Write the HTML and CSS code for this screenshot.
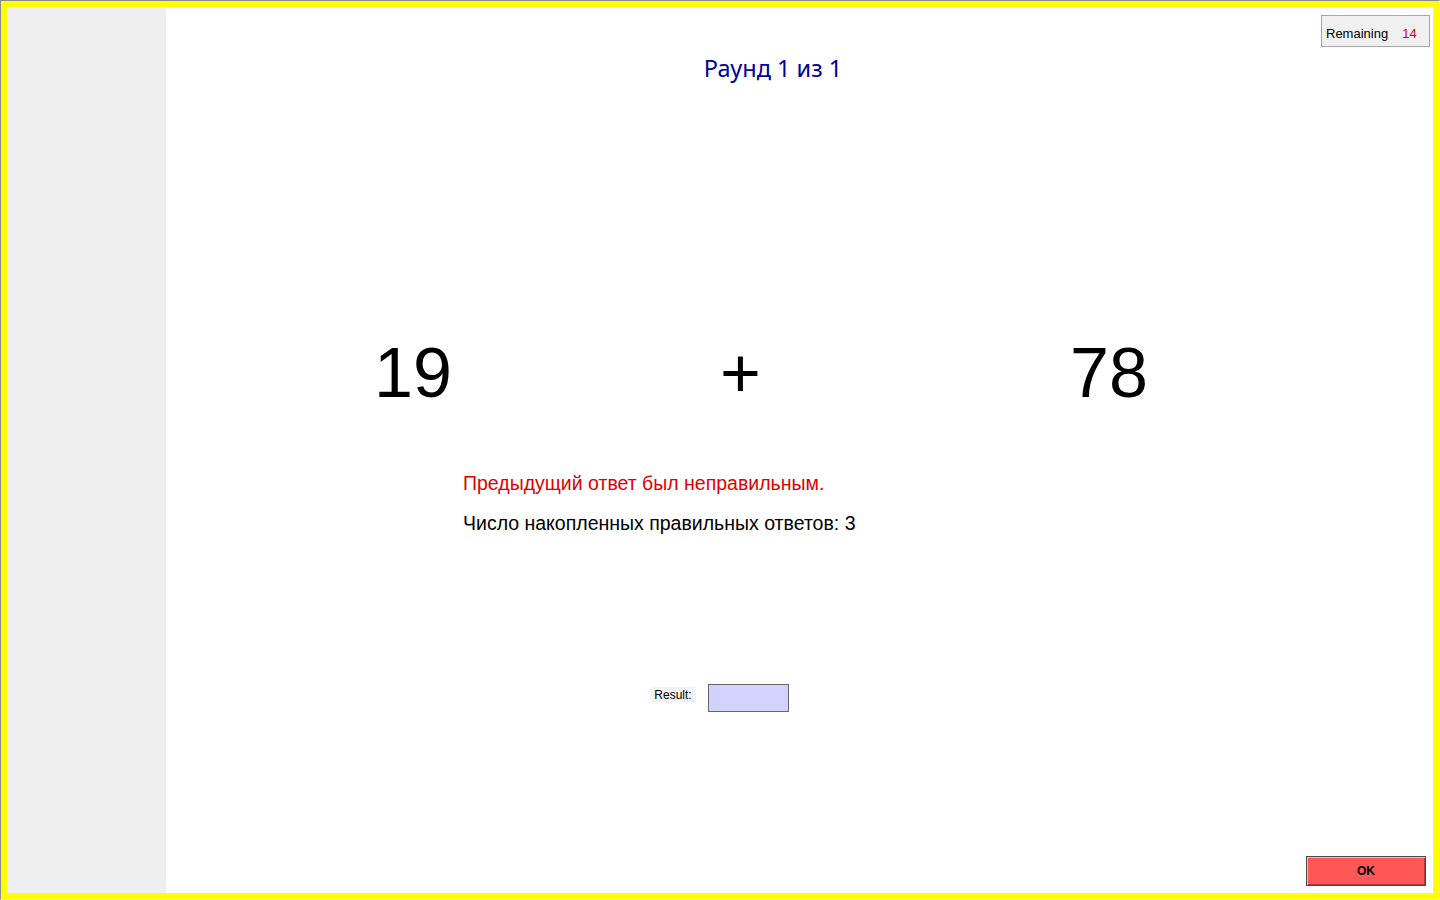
FILE: index.html
```html
<!DOCTYPE html>
<html lang="ru">
<head>
<meta charset="utf-8">
<title>Раунд 1 из 1</title>
<link rel="stylesheet" href="styles.css">
</head>
<body>
<div class="frame">
  <div class="inner">
    <aside class="side"></aside>
    <main class="main">
      <div class="topbar">
        <div class="remaining"><span class="rem-label">Remaining</span><span class="rem-count">14</span></div>
      </div>
      <h1 class="title">Раунд 1 из 1</h1>
      <div class="problem">
        <div class="operand">19</div>
        <div class="operator">+</div>
        <div class="operand">78</div>
      </div>
      <div class="messages">
        <p class="msg msg-error">Предыдущий ответ был неправильным.</p>
        <p class="msg">Число накопленных правильных ответов: 3</p>
      </div>
      <div class="result-row">
        <label class="result-label" for="result">Result:</label>
        <input class="result-input" id="result" type="text">
      </div>
      <button class="ok-btn" type="button">OK</button>
    </main>
  </div>
</div>
</body>
</html>
```
FILE: styles.css
```css
* { box-sizing: border-box; }
html, body { margin: 0; padding: 0; }
body {
  width: 1440px;
  height: 900px;
  overflow: hidden;
  background: #ffffff;
  font-family: "Liberation Sans", Arial, sans-serif;
}
.frame {
  width: 1440px;
  height: 900px;
  border-top: 1px solid #8a8a8a;
  border-left: 1px solid #8a8a8a;
  border-right: 1px solid #e6e6e6;
  border-bottom: 1px solid #e6e6e6;
}
.inner {
  height: 100%;
  border: 6px solid #ffff00;
  display: flex;
}
.side {
  width: 159px;
  flex: none;
  background: #efefef;
}
.main {
  flex: 1;
  display: flex;
  flex-direction: column;
  background: #ffffff;
}
.topbar {
  display: flex;
  justify-content: flex-end;
  padding-top: 8px;
  padding-right: 3px;
}
.remaining {
  width: 109px;
  height: 32px;
  border: 1px solid #a5a5a5;
  background: #f0f0f0;
  display: flex;
  align-items: center;
  padding-left: 4px;
  padding-top: 4px;
  font-size: 13px;
  color: #000;
}
.rem-count {
  color: #e00000;
  margin-left: 14px;
}
.title {
  margin: 7px 0 0 0;
  padding-right: 53px;
  text-align: center;
  font-family: "Noto Sans", "Open Sans", sans-serif;
  font-weight: normal;
  font-size: 23.5px;
  line-height: 28px;
  color: #00009a;
}
.problem {
  margin-top: 255px;
  margin-left: 208px;
  display: grid;
  grid-template-columns: 346px 350px 350px;
  font-size: 70px;
  line-height: 72px;
  color: #000;
}
.messages {
  margin-top: 63px;
  margin-left: 297px;
  display: flex;
  flex-direction: column;
  gap: 17px;
}
.msg {
  margin: 0;
  font-size: 19.5px;
  line-height: 23px;
  color: #000;
}
.msg-error { color: #e00000; }
.result-row {
  margin-top: 149px;
  margin-left: 485px;
  display: flex;
  align-items: flex-start;
  gap: 13px;
}
.result-label {
  margin-top: 3px;
  width: 44px;
  height: 15px;
  padding-top: 1px;
  background: #f2f2f2;
  font-size: 12px;
  line-height: 15px;
  text-align: center;
  color: #000;
}
.result-input {
  width: 81px;
  height: 28px;
  border: 1px solid #666;
  background: #d2d2ff;
  margin: 0;
  padding: 0 4px;
  outline: none;
}
.ok-btn {
  margin-top: auto;
  margin-right: 7px;
  margin-bottom: 7px;
  align-self: flex-end;
  width: 120px;
  height: 30px;
  background: #ff5656;
  border: 1px solid #4a4a4a;
  box-shadow: inset 1px 1px 0 #ffb4b4, inset -1px -1px 0 #a83a3a;
  font-family: "Liberation Sans", Arial, sans-serif;
  font-weight: bold;
  font-size: 12px;
  color: #000;
  padding: 0;
}
```
